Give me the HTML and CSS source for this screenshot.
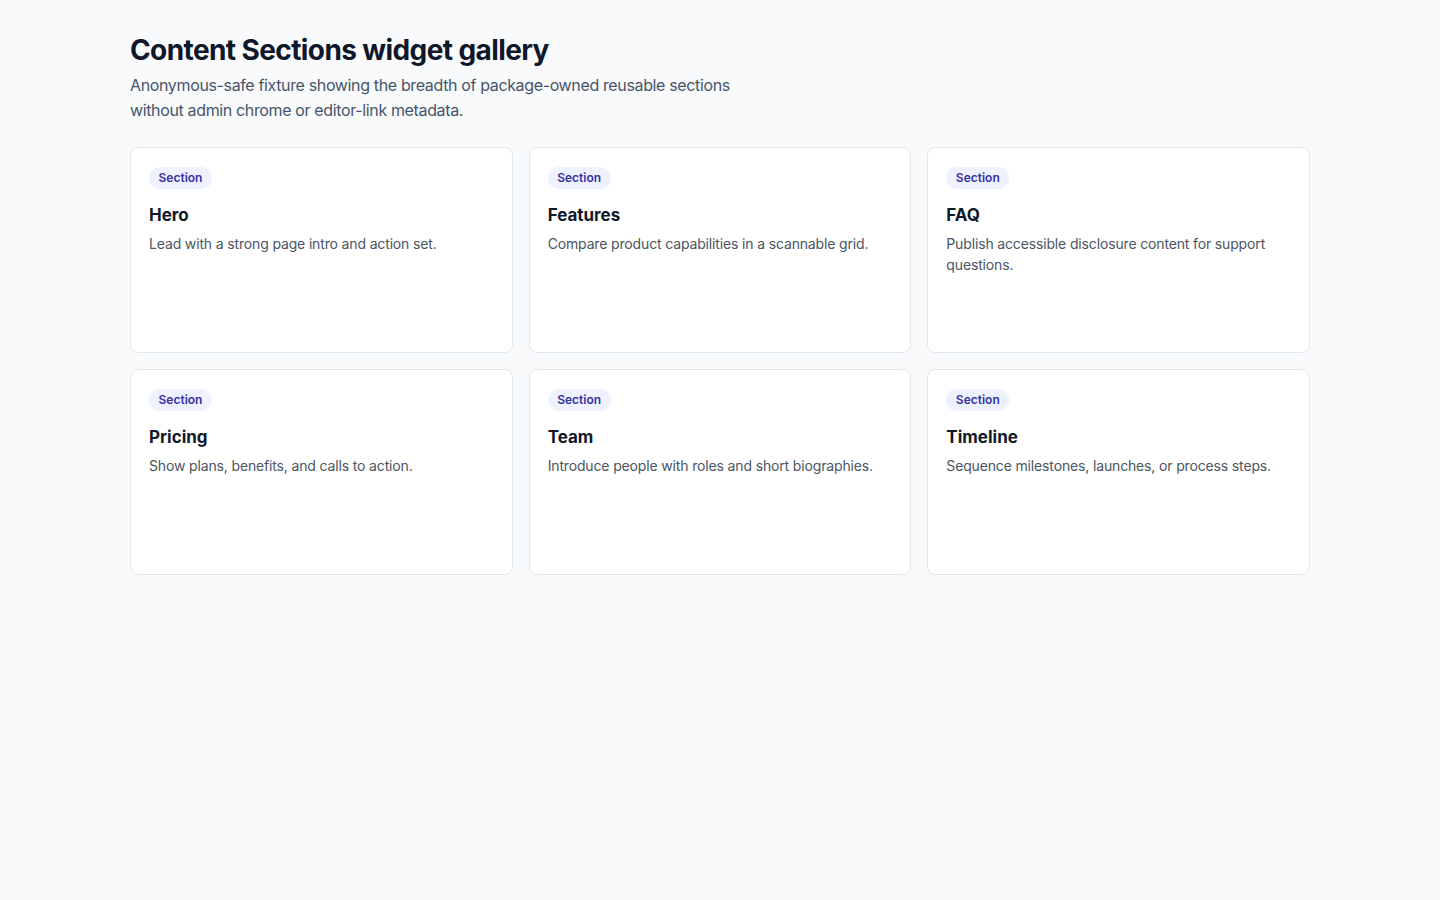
FILE: index.html
```html
<!DOCTYPE html>
<html lang="en">
<head>
<meta charset="utf-8">
<title>Content Sections widget gallery</title>
<link rel="stylesheet" href="styles.css">
</head>
<body>
<main class="page">
  <header class="intro">
    <h1 class="title">Content Sections widget gallery</h1>
    <p class="lede">Anonymous-safe fixture showing the breadth of package-owned reusable sections without admin chrome or editor-link metadata.</p>
  </header>
  <section class="grid">
    <article class="card">
      <span class="badge">Section</span>
      <h2 class="card-title">Hero</h2>
      <p class="card-text">Lead with a strong page intro and action set.</p>
    </article>
    <article class="card">
      <span class="badge">Section</span>
      <h2 class="card-title">Features</h2>
      <p class="card-text">Compare product capabilities in a scannable grid.</p>
    </article>
    <article class="card">
      <span class="badge">Section</span>
      <h2 class="card-title">FAQ</h2>
      <p class="card-text">Publish accessible disclosure content for support questions.</p>
    </article>
    <article class="card">
      <span class="badge">Section</span>
      <h2 class="card-title">Pricing</h2>
      <p class="card-text">Show plans, benefits, and calls to action.</p>
    </article>
    <article class="card">
      <span class="badge">Section</span>
      <h2 class="card-title">Team</h2>
      <p class="card-text">Introduce people with roles and short biographies.</p>
    </article>
    <article class="card">
      <span class="badge">Section</span>
      <h2 class="card-title">Timeline</h2>
      <p class="card-text">Sequence milestones, launches, or process steps.</p>
    </article>
  </section>
</main>
</body>
</html>
```

FILE: styles.css
```css
* { box-sizing: border-box; }
html, body {
  margin: 0;
  padding: 0;
  background: #f8fafc;
  font-family: Inter, "Noto Sans", "Liberation Sans", sans-serif;
  color: #111827;
}
.page {
  max-width: 1180px;
  margin: 0 auto;
  padding: 33px 0;
}
.intro { margin-bottom: 24px; }
.title {
  margin: 0 0 6px;
  font-size: 28px;
  line-height: 34px;
  font-weight: 700;
  letter-spacing: -0.6px;
  color: #0f172a;
}
.lede {
  margin: 0;
  max-width: 640px;
  font-size: 16px;
  line-height: 25px;
  letter-spacing: -0.36px;
  color: #475569;
}
.grid {
  display: grid;
  grid-template-columns: repeat(3, 1fr);
  gap: 16px;
}
.card {
  min-height: 206px;
  background: #ffffff;
  border: 1px solid #e2e8f0;
  border-radius: 8px;
  padding: 19px 18px;
  display: flex;
  flex-direction: column;
  align-items: flex-start;
}
.badge {
  display: inline-block;
  padding: 0 9.5px;
  height: 22px;
  line-height: 22px;
  border-radius: 999px;
  background: #eef2ff;
  color: #3730a3;
  font-size: 12px;
  font-weight: 600;
}
.card-title {
  margin: 14px 0 6px;
  font-size: 17px;
  line-height: 24px;
  font-weight: 700;
  color: #111827;
}
.card-text {
  margin: 0;
  font-size: 14px;
  line-height: 21px;
  letter-spacing: -0.15px;
  color: #4b5563;
}
```
